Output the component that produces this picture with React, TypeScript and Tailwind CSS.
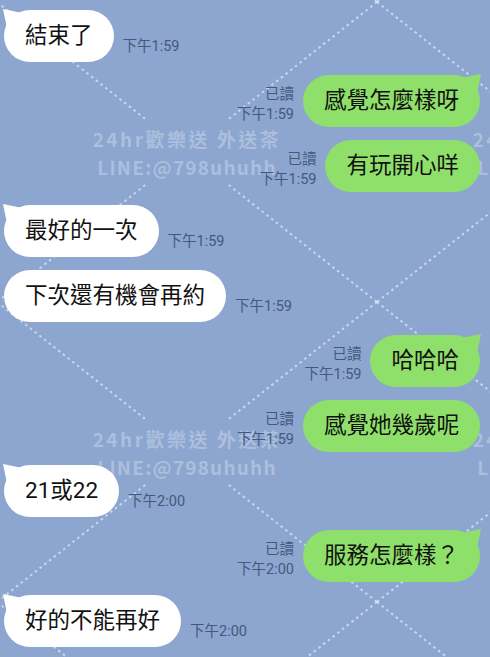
import React from 'react';

interface Message {
  side: 'left' | 'right';
  text: string;
  time: string;
  tail?: boolean;
}

const messages: Message[] = [
  { side: 'left', text: '結束了', time: '下午1:59', tail: true },
  { side: 'right', text: '感覺怎麼樣呀', time: '下午1:59', tail: true },
  { side: 'right', text: '有玩開心咩', time: '下午1:59' },
  { side: 'left', text: '最好的一次', time: '下午1:59', tail: true },
  { side: 'left', text: '下次還有機會再約', time: '下午1:59' },
  { side: 'right', text: '哈哈哈', time: '下午1:59', tail: true },
  { side: 'right', text: '感覺她幾歲呢', time: '下午1:59' },
  { side: 'left', text: '21或22', time: '下午2:00', tail: true },
  { side: 'right', text: '服務怎麼樣？', time: '下午2:00', tail: true },
  { side: 'left', text: '好的不能再好', time: '下午2:00', tail: true },
];

// watermark tiles: 380x300, diagonals corner to corner, text in the middle
const TILE_W = 380;
const TILE_H = 300;
const GAP = 0.11;

function Watermark() {
  const tiles: { ox: number; oy: number }[] = [];
  for (let i = -1; i <= 1; i++) {
    for (let j = -1; j <= 2; j++) {
      tiles.push({ ox: -3 + TILE_W * i, oy: 2 + TILE_H * j });
    }
  }

  const seg = (x0: number, y0: number, x1: number, y1: number, a: number, b: number, key: string) => (
    <line
      key={key}
      x1={x0 + (x1 - x0) * a}
      y1={y0 + (y1 - y0) * a}
      x2={x0 + (x1 - x0) * b}
      y2={y0 + (y1 - y0) * b}
    />
  );

  return (
    <svg className="absolute inset-0" width={490} height={657} viewBox="0 0 490 657">
      <g stroke="#ffffff" strokeOpacity={0.55} strokeWidth={2} strokeDasharray="2.5 3.5">
        {tiles.map(({ ox, oy }, n) => (
          <g key={n}>
            {seg(ox, oy, ox + TILE_W, oy + TILE_H, 0, 0.5 - GAP, 'a1')}
            {seg(ox, oy, ox + TILE_W, oy + TILE_H, 0.5 + GAP, 1, 'a2')}
            {seg(ox + TILE_W, oy, ox, oy + TILE_H, 0, 0.5 - GAP, 'b1')}
            {seg(ox + TILE_W, oy, ox, oy + TILE_H, 0.5 + GAP, 1, 'b2')}
          </g>
        ))}
      </g>
      <g
        fill="#ffffff"
        fillOpacity={0.28}
        fontWeight={700}
        fontSize={19}
        textAnchor="middle"
        style={{ fontFamily: "'Noto Sans CJK TC', sans-serif" }}
      >
        {tiles.map(({ ox, oy }, n) => (
          <g key={n}>
            <text x={ox + 190} y={oy + 145} letterSpacing={2.5}>
              24hr歡樂送 外送茶
            </text>
            <text x={ox + 190} y={oy + 173} letterSpacing={1.2}>
              LINE:@798uhuhh
            </text>
          </g>
        ))}
      </g>
    </svg>
  );
}

function Tail({ side, color }: { side: 'left' | 'right'; color: string }) {
  return (
    <svg
      className={`absolute top-[-1px] ${side === 'left' ? 'left-[-1px]' : 'right-[-1px] -scale-x-100'}`}
      width={18}
      height={18}
      viewBox="0 0 18 18"
    >
      <path d="M0 0 L17 3.5 L3.5 17 Z" fill={color} />
    </svg>
  );
}

function Bubble({ msg }: { msg: Message }) {
  const green = msg.side === 'right';
  const color = green ? '#8fe06a' : '#ffffff';
  return (
    <div
      className={`relative h-[52px] rounded-full px-[21px] flex items-center text-[22.5px] text-[#111] ${
        green ? 'bg-[#8fe06a]' : 'bg-white'
      }`}
    >
      {msg.tail && <Tail side={msg.side} color={color} />}
      <span className="relative">{msg.text}</span>
    </div>
  );
}

export default function App() {
  return (
    <div className="relative w-[490px] h-[657px] overflow-hidden bg-[#8ca6d0] font-['Roboto','Noto_Sans_CJK_TC',sans-serif]">
      <Watermark />
      <div className="relative flex flex-col gap-[13px] pt-[10px]">
        {messages.map((msg, i) =>
          msg.side === 'left' ? (
            <div key={i} className="flex items-end pl-[4px]">
              <Bubble msg={msg} />
              <span className="ml-[9px] mb-[5px] text-[14.5px] leading-[20px] text-[#46597a]">{msg.time}</span>
            </div>
          ) : (
            <div key={i} className="flex items-end justify-end pr-[10px]">
              <div className="mr-[9px] mb-[2px] flex flex-col items-end text-[14.5px] leading-[20px] text-[#46597a]">
                <span>已讀</span>
                <span>{msg.time}</span>
              </div>
              <Bubble msg={msg} />
            </div>
          )
        )}
      </div>
    </div>
  );
}
